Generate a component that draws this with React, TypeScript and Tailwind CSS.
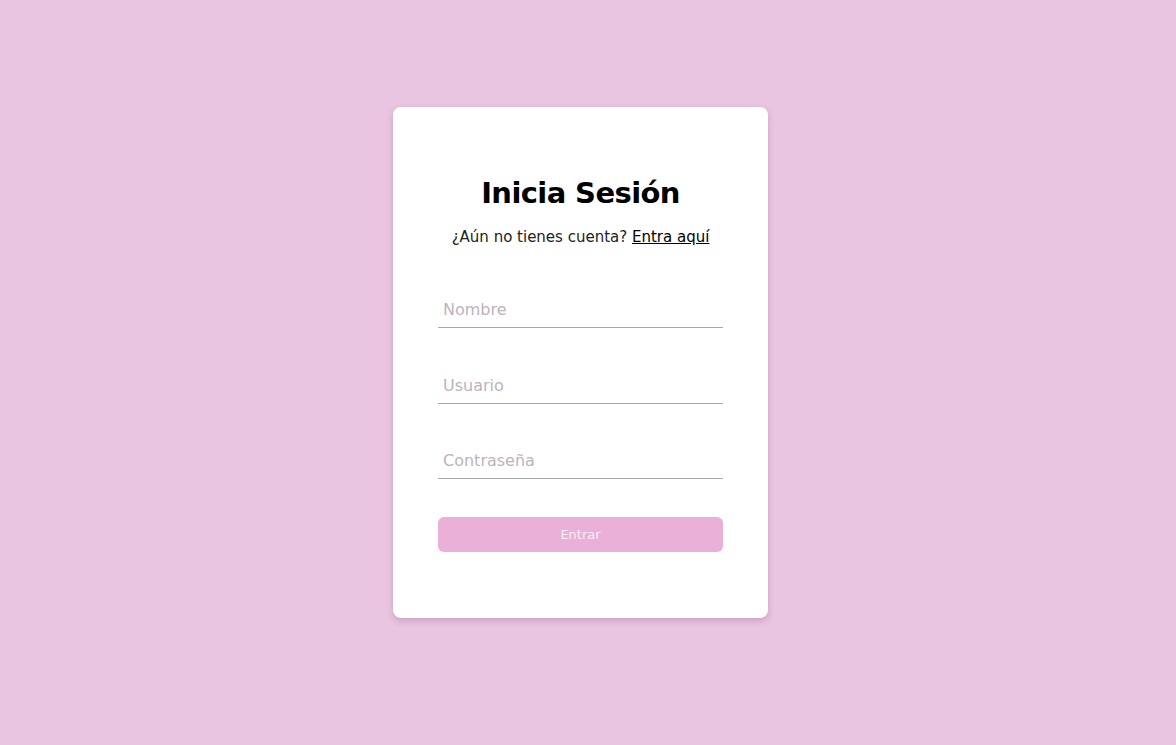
import React from "react";

export default function App() {
  return (
    <div className="min-h-screen w-full bg-[#e9c5e1] flex justify-center pt-[107px] pr-[15px]" style={{ fontFamily: '"DejaVu Sans", "Noto Sans", sans-serif' }}>
      <div className="w-[375px] h-[511px] bg-white rounded-lg shadow-[0_3px_6px_rgba(120,60,100,0.25)] px-[45px] pt-[68px] flex flex-col">
        <h1 className="text-center text-[29px] leading-[36px] font-bold text-black tracking-[-0.6px]">Inicia Sesión</h1>
        <p className="text-center text-[15px] leading-[22px] text-[#222] mt-[15px]">
          ¿Aún no tienes cuenta? <a href="#" className="underline text-black">Entra aquí</a>
        </p>
        <div className="mt-[44px] flex flex-col gap-[39.5px]">
          {["Nombre", "Usuario", "Contraseña"].map((p) => (
            <input
              key={p}
              placeholder={p}
              type={p === "Contraseña" ? "password" : "text"}
              className="w-full h-[36px] border-b border-[#a9a9a9] px-[5px] text-[16px] outline-none placeholder:text-[#bdb3bd]"
            />
          ))}
        </div>
        <button className="mt-[38px] w-full h-[35px] rounded-md bg-[#ebb0d8] text-[#f8eef4] text-[13px]">Entrar</button>
      </div>
    </div>
  );
}
